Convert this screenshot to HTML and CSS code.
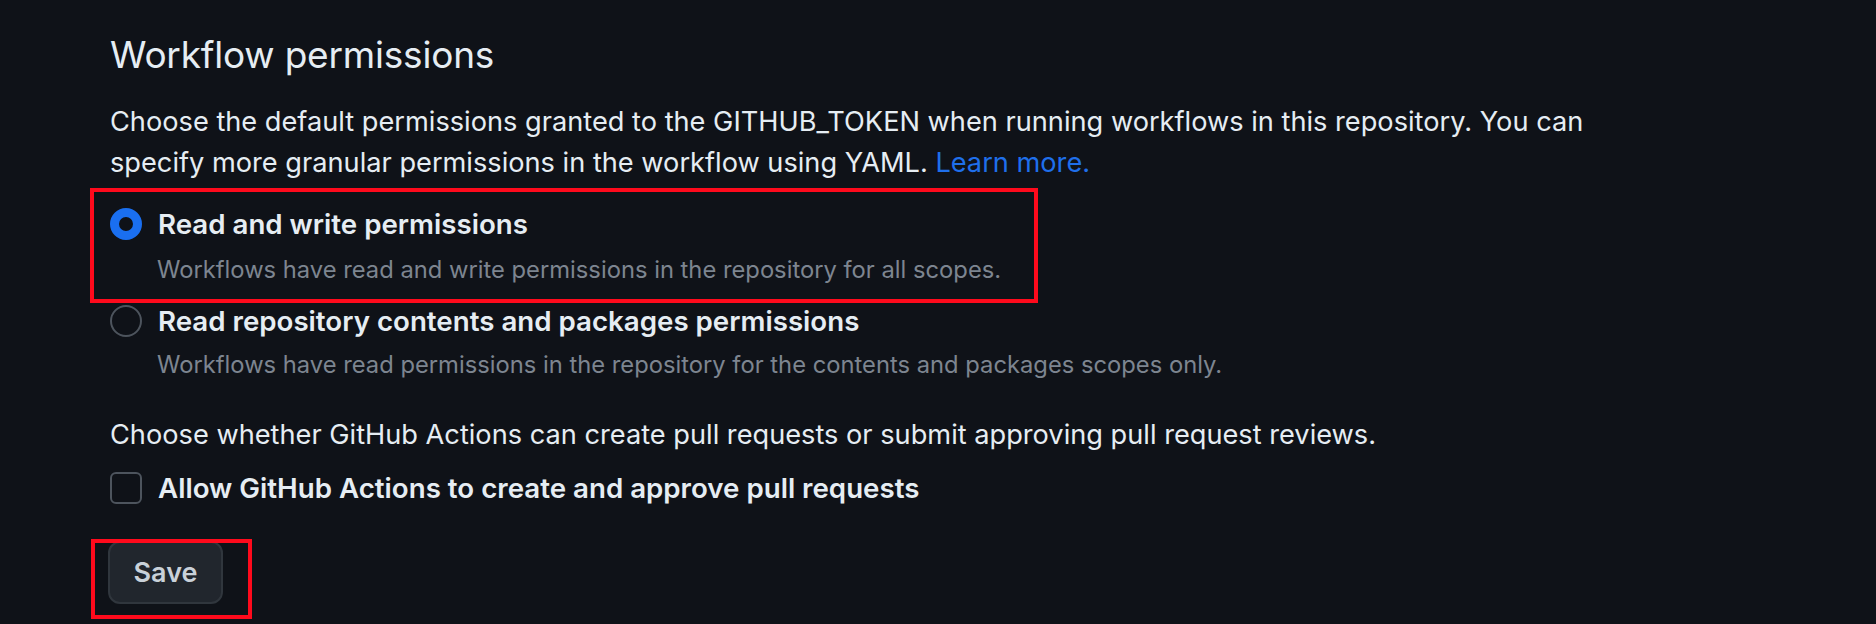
FILE: index.html
```html
<!DOCTYPE html>
<html lang="en">
<head>
<meta charset="utf-8">
<title>Workflow permissions</title>
<link rel="stylesheet" href="styles.css">
</head>
<body>
<main class="page">
  <h2 class="title">Workflow permissions</h2>
  <p class="lead">Choose the default permissions granted to the GITHUB_TOKEN when running workflows in this repository. You can specify more granular permissions in the workflow using YAML. <a class="link" href="#">Learn more.</a></p>

  <div class="option option-first annotated">
    <div class="choice">
      <span class="radio radio-checked"></span>
      <span class="choice-label">Read and write permissions</span>
    </div>
    <p class="note note-first">Workflows have read and write permissions in the repository for all scopes.</p>
  </div>

  <div class="option option-second">
    <div class="choice">
      <span class="radio"></span>
      <span class="choice-label">Read repository contents and packages permissions</span>
    </div>
    <p class="note note-second">Workflows have read permissions in the repository for the contents and packages scopes only.</p>
  </div>

  <p class="lead lead-second">Choose whether GitHub Actions can create pull requests or submit approving pull request reviews.</p>

  <div class="choice choice-check">
    <span class="checkbox"></span>
    <span class="choice-label">Allow GitHub Actions to create and approve pull requests</span>
  </div>

  <div class="actions">
    <button class="btn save-annotated" type="button">Save</button>
  </div>
</main>
</body>
</html>
```

FILE: styles.css
```css
html, body {
  margin: 0;
  padding: 0;
  background: #0f1218;
  height: 100%;
  overflow: hidden;
}

.page {
  padding: 32px 0 0 110px;
  font-family: Inter, "Liberation Sans", sans-serif;
  color: #e6edf3;
}

.title {
  margin: 0;
  font-size: 37px;
  line-height: 46px;
  font-weight: 400;
  letter-spacing: -0.2px;
}

.lead {
  margin: 23px 0 0 0;
  font-size: 27.2px;
  line-height: 41px;
  max-width: 1520px;
}

.lead-second {
  margin-top: 31px;
}

.link {
  color: #1f6feb;
  text-decoration: none;
}

.option {
  display: flex;
  flex-direction: column;
}

.option-first {
  margin-top: 25px;
}

.option-second {
  margin-top: 17px;
}

.choice {
  display: flex;
  align-items: center;
  gap: 16px;
  height: 32px;
}

.choice-label {
  font-size: 27.7px;
  font-weight: 600;
  line-height: 32px;
}

.radio {
  box-sizing: border-box;
  width: 32px;
  height: 32px;
  border-radius: 50%;
  border: 2px solid #4d545d;
  flex: none;
}

.radio-checked {
  border: 9px solid #1a6ff0;
}

.note {
  margin: 12px 0 0 47px;
  font-size: 23.75px;
  line-height: 36px;
  color: #7d8590;
}

.note-second {
  margin-top: 10px;
}

.choice-check {
  margin-top: 17px;
}

.checkbox {
  box-sizing: border-box;
  width: 32px;
  height: 32px;
  border-radius: 6px;
  border: 2px solid #4d545d;
  flex: none;
}

.actions {
  margin-top: 37px;
  display: flex;
}

.btn {
  box-sizing: border-box;
  width: 115px;
  height: 63px;
  margin-left: -2px;
  border-radius: 12px;
  border: 2px solid #30363d;
  background: #21262d;
  color: #c9d1d9;
  font-family: Inter, "Liberation Sans", sans-serif;
  font-size: 27px;
  font-weight: 600;
  padding: 0;
}

.annotated,
.save-annotated {
  position: relative;
}

.annotated {
  width: 908px;
}

.annotated::after {
  content: "";
  position: absolute;
  top: -20px;
  left: -20px;
  right: -20px;
  bottom: -15px;
  border: 4px solid #ff0a1c;
  pointer-events: none;
}

.save-annotated::after {
  content: "";
  position: absolute;
  top: -4px;
  left: -19px;
  right: -31px;
  bottom: -17px;
  border: 4px solid #ff0a1c;
  pointer-events: none;
}
```
